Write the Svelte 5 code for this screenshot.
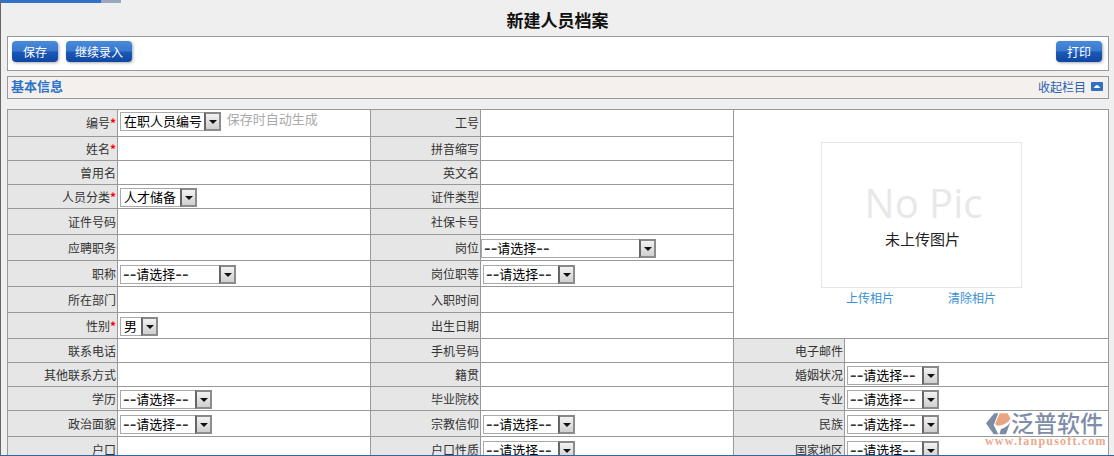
<script lang="ts">
  type Sel = { text: string; w: number; flush?: boolean; dashed?: boolean };
  type Cell = { label: string; req?: boolean; sel?: Sel; hint?: string };
  type Row = { h: number; cells: Cell[] };

  const pick = (w: number, flush = false): Sel => ({ text: "请选择", w, flush, dashed: true });

  const rows: Row[] = [
    { h: 27, cells: [{ label: "编号", req: true, sel: { text: "在职人员编号", w: 101 }, hint: "保存时自动生成" }, { label: "工号" }] },
    { h: 24, cells: [{ label: "姓名", req: true }, { label: "拼音缩写" }] },
    { h: 24, cells: [{ label: "曾用名" }, { label: "英文名" }] },
    { h: 24, cells: [{ label: "人员分类", req: true, sel: { text: "人才储备", w: 77 } }, { label: "证件类型" }] },
    { h: 26, cells: [{ label: "证件号码" }, { label: "社保卡号" }] },
    { h: 26, cells: [{ label: "应聘职务" }, { label: "岗位", sel: pick(175, true) }] },
    { h: 26, cells: [{ label: "职称", sel: pick(116) }, { label: "岗位职等", sel: pick(92) }] },
    { h: 26, cells: [{ label: "所在部门" }, { label: "入职时间" }] },
    { h: 26, cells: [{ label: "性别", req: true, sel: { text: "男", w: 38 } }, { label: "出生日期" }] },
    { h: 24, cells: [{ label: "联系电话" }, { label: "手机号码" }, { label: "电子邮件" }] },
    { h: 24, cells: [{ label: "其他联系方式" }, { label: "籍贯" }, { label: "婚姻状况", sel: pick(92) }] },
    { h: 24, cells: [{ label: "学历", sel: pick(92) }, { label: "毕业院校" }, { label: "专业", sel: pick(92) }] },
    { h: 26, cells: [{ label: "政治面貌", sel: pick(92) }, { label: "宗教信仰", sel: pick(92) }, { label: "民族", sel: pick(92) }] },
    { h: 26, cells: [{ label: "户口" }, { label: "户口性质", sel: pick(92) }, { label: "国家地区", sel: pick(92) }] },
  ];
</script>

<div class="page">
  <div class="tabs"><span class="on"></span><span class="off"></span></div>
  <h1>新建人员档案</h1>

  <div class="toolbar">
    <button>保存</button>
    <button class="wide">继续录入</button>
    <button class="print">打印</button>
  </div>

  <div class="section">
    <b>基本信息</b>
    <a href="#top">收起栏目</a>
    <svg class="fold" width="12" height="9" viewBox="0 0 12 9">
      <rect width="12" height="9" rx="1" fill="#2f6fc4" />
      <path d="M2.5 6h7L7 3.2H5z" fill="#fff" />
    </svg>
  </div>

  <table>
    <colgroup>
      <col class="cl" /><col class="cv" /><col class="cl" /><col class="cv" /><col class="cl3" /><col />
    </colgroup>
    <tbody>
      {#each rows as row, i (i)}
        <tr style="height: {row.h}px" class:first={i === 0}>
          {#each row.cells as c}
            <th>{c.label}{#if c.req}<em>*</em>{/if}</th>
            <td>
              {#if c.sel}
                <span class="sel" class:flush={c.sel.flush} style="width: {c.sel.w}px">
                  <span class="val" class:dashed={c.sel.dashed}>{#if c.sel.dashed}<i>--</i>{/if}{c.sel.text}{#if c.sel.dashed}<i>--</i>{/if}</span>
                  <span class="arrow"></span>
                </span>
              {/if}
              {#if c.hint}<span class="hint">{c.hint}</span>{/if}
            </td>
          {/each}
          {#if i === 0}
            <td class="photo" rowspan="9" colspan="2">
              <div class="pic">
                <span class="nopic">No Pic</span>
                <span class="nocap">未上传图片</span>
              </div>
              <div class="links">
                <a href="#top">上传相片</a>
                <a href="#top">清除相片</a>
              </div>
            </td>
          {/if}
        </tr>
      {/each}
    </tbody>
  </table>

  <div class="mark">
    <svg width="26" height="24" viewBox="0 0 26 24">
      <path d="M9.3 2.3h4L8.7 14l4.6 9.3H8.7L1 12.3z" fill="#7c8ca6" />
      <path d="M14.7 2.3h8l2.6 5C24 11 19 14.7 12.7 14.7L10 13.3z" fill="#e9a582" />
      <path d="M25.3 11.3L21 23.3h-6.7L16 18c4-1 7-3.500 9.300-6.700z" fill="#7c8ca6" />
    </svg>
    <div class="brand">
      <span class="cn">泛普软件</span>
      <span class="url">www.fanpusoft.com</span>
    </div>
  </div>
</div>

<style>
  :global(body) { background: #efefef; }
  .page {
    position: relative; box-sizing: border-box; width: 1114px; height: 456px; overflow: hidden;
    border-left: 1px solid #666; border-bottom: 1px solid #2f66a8;
    font: 12px "Noto Sans CJK SC", "Liberation Sans", sans-serif; color: #333;
  }
  .tabs { display: flex; height: 3px; }
  .tabs .on { width: 100px; background: #2f72c8; }
  .tabs .off { width: 20px; background: #9aa6bc; }
  h1 { margin: 0; height: 33px; line-height: 34px; text-align: center; font-size: 17px; font-weight: 700; color: #111; }

  .toolbar {
    display: flex; gap: 8px; align-items: flex-start; box-sizing: border-box;
    margin-left: 6px; width: 1102px; height: 35px; padding: 4px 6px 0 4px;
    background: #fff; border: 1px solid #999;
  }
  button {
    height: 21px; padding: 0 11px; border: 0; border-radius: 4px; color: #fff;
    font: inherit; line-height: 20px;
    background: linear-gradient(#4a8ad8 0, #3a7ad0 45%, #1a58b4 55%, #0f46a4 100%);
    box-shadow: 1px 1px 3px #aaa;
  }
  button.wide { padding: 0 9px; }
  .print { margin-left: auto; }

  .section {
    display: flex; align-items: center; box-sizing: border-box; margin: 5px 0 0 6px;
    width: 1102px; height: 23px; padding: 0 5px 2px 3px;
    background: #f3f0ee; border: 1px solid #999;
  }
  .section b { font-size: 13px; color: #2c72c8; margin-top: -2px; }
  .section a { margin-left: auto; color: #2a60b0; text-decoration: none; }
  .fold { margin-left: 5px; }

  table {
    border-collapse: collapse; table-layout: fixed; width: 1102px; margin: 10px 0 0 6px;
    background: #fff;
  }
  .cl { width: 110px; }
  .cv { width: 253px; }
  .cl3 { width: 111px; }
  th, td { border: 1px solid #999; padding: 0; }
  th { background: #e6e6e6; font-weight: 400; text-align: right; padding-right: 1px; line-height: 14px; }
  th em { color: #f00; font-style: normal; font-weight: 700; }
  td { padding-left: 2px; white-space: nowrap; }
  .first td { vertical-align: top; padding-top: 1px; }
  .first th { padding-bottom: 1px; }

  .sel {
    display: inline-flex; box-sizing: border-box; height: 19px; vertical-align: middle; margin-top: 2px;
    border: 1px solid #aaa; background: #fff; color: #000;
    font-size: 13px; line-height: 16px;
  }
  .first .sel { margin-top: 0; }
  .sel.flush { margin-left: -2px; margin-top: 0; }
  .val { flex: 1; padding-left: 3px; white-space: nowrap; }
  .val.dashed { padding-left: 2px; }
  .val i { font: 20px/0 "Liberation Sans", sans-serif; vertical-align: -2px; color: #333; }
  .arrow {
    position: relative; box-sizing: border-box; flex: none; width: 17px; margin: -1px -1px -1px 0;
    border: 2px solid #8c8c8c; border-top-color: #888; border-left-color: #666;
    background: linear-gradient(#f2f2f2, #cfcfcf);
  }
  .arrow::after {
    content: ""; position: absolute; left: 3px; top: 6px;
    border: 4px solid transparent; border-top: 4px solid #111; border-bottom: 0;
  }
  .hint { margin-left: 3px; font-size: 13px; line-height: 16px; color: #aaa; vertical-align: 1px; }

  .photo { background: #fff; padding: 0; vertical-align: top; }
  .first .photo { padding: 0; }
  .pic {
    box-sizing: border-box; display: flex; flex-direction: column; align-items: center;
    width: 201px; height: 146px; margin: 32px 0 0 87px; padding-top: 37px;
    border: 1px solid #e6e6e6;
  }
  .nopic { font: 400 40px/46px "Open Sans", "Noto Sans", sans-serif; color: #e8e8e8; padding-left: 4px; }
  .nocap { font-size: 15px; line-height: 18px; color: #222; margin-top: 4px; padding-left: 2px; }
  .links { display: flex; gap: 54px; margin: 1px 0 0 112px; }
  .links a { color: #3a8fd6; text-decoration: none; }

  .mark { position: absolute; left: 984px; top: 411px; display: flex; gap: 1px; pointer-events: none; }
  .brand { display: flex; flex-direction: column; margin-left: -1px; }
  .cn { font-size: 23px; line-height: 23px; font-weight: 500; color: #7f8ea8; }
  .url { margin: 2px 0 0 -26px; font: 700 12px/11px "Liberation Serif", serif; color: #eaa98c; letter-spacing: 1.2px; }
</style>
